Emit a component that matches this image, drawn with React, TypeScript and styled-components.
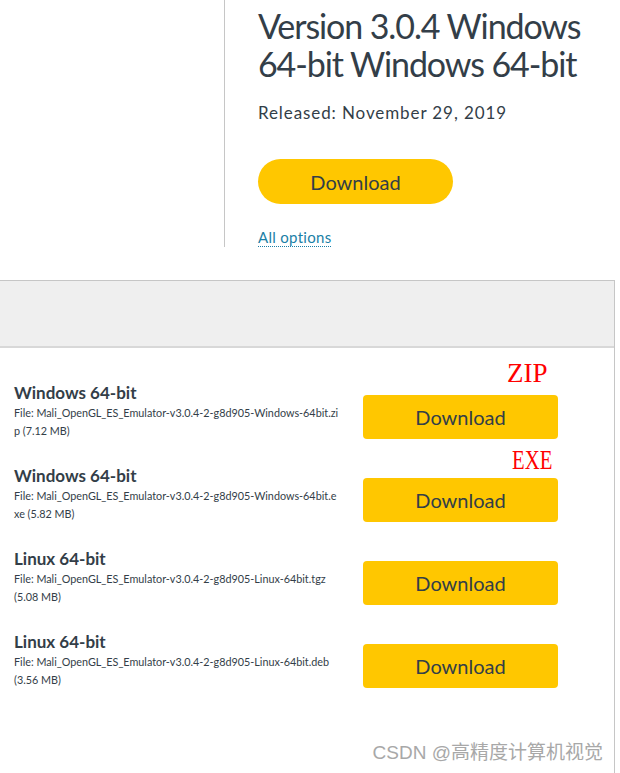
import React from 'react'
import styled, { createGlobalStyle } from 'styled-components'

const GlobalStyle = createGlobalStyle`
  html, body {
    margin: 0;
    padding: 0;
    background: #fff;
  }

  body {
    font-family: Lato, 'Open Sans', sans-serif;
    color: #333e48;
  }
`

type DownloadItem = {
  platform: string
  file: string
  size: string
  note?: string
  noteGap?: number
  noteLeft?: number
  noteSqueeze?: number
}

const downloads: DownloadItem[] = [
  {
    platform: 'Windows 64-bit',
    file: 'Mali_OpenGL_ES_Emulator-v3.0.4-2-g8d905-Windows-64bit.zip',
    size: '7.12 MB',
    note: 'ZIP',
    noteGap: 8,
    noteLeft: 144,
  },
  {
    platform: 'Windows 64-bit',
    file: 'Mali_OpenGL_ES_Emulator-v3.0.4-2-g8d905-Windows-64bit.exe',
    size: '5.82 MB',
    note: 'EXE',
    noteGap: 4,
    noteLeft: 149,
    noteSqueeze: 0.77,
  },
  {
    platform: 'Linux 64-bit',
    file: 'Mali_OpenGL_ES_Emulator-v3.0.4-2-g8d905-Linux-64bit.tgz',
    size: '5.08 MB',
  },
  {
    platform: 'Linux 64-bit',
    file: 'Mali_OpenGL_ES_Emulator-v3.0.4-2-g8d905-Linux-64bit.deb',
    size: '3.56 MB',
  },
]

export default function App() {
  return (
    <>
      <GlobalStyle />
      <Page>
        <Hero>
          <Aside />
          <HeroBody>
            <Title>Version 3.0.4 Windows 64-bit Windows 64-bit</Title>
            <Released>Released: November 29, 2019</Released>
            <PillButton>Download</PillButton>
            <AllOptions href="#">All options</AllOptions>
          </HeroBody>
        </Hero>

        <Panel>
          <PanelHeader />
          <List>
            {downloads.map((d, i) => (
              <Row key={i}>
                <Info>
                  <Platform>{d.platform}</Platform>
                  <FileName>
                    File: <FilePath>{d.file}</FilePath> <Size>({d.size})</Size>
                  </FileName>
                </Info>
                <ButtonCell>
                  {d.note && (
                    <Note
                      $gap={d.noteGap ?? 8}
                      $left={d.noteLeft ?? 144}
                      $squeeze={d.noteSqueeze ?? 1}>
                      {d.note}
                    </Note>
                  )}
                  <RowButton>Download</RowButton>
                </ButtonCell>
              </Row>
            ))}
          </List>
        </Panel>

        <Watermark>CSDN @高精度计算机视觉</Watermark>
      </Page>
    </>
  )
}

const Page = styled.div`
  position: relative;
  display: flex;
  flex-direction: column;
  min-height: 100vh;
  overflow: hidden;
`

const Hero = styled.section`
  display: flex;
`

const Aside = styled.div`
  width: 224px;
  flex-shrink: 0;
  border-right: 1px solid #c6c6c6;
`

const HeroBody = styled.div`
  display: flex;
  flex-direction: column;
  align-items: flex-start;
  padding: 7px 0 0 33px;
`

const Title = styled.h1`
  margin: 0;
  font-size: 34px;
  line-height: 38px;
  font-weight: 400;
  letter-spacing: -1.1px;
  color: #333e48;
`

const Released = styled.p`
  margin: 18px 0 0;
  font-size: 17px;
  line-height: 24px;
  letter-spacing: 0.9px;
`

const PillButton = styled.button`
  margin-top: 34px;
  width: 195px;
  height: 45px;
  border: none;
  border-radius: 23px;
  background: #ffc700;
  color: #333e48;
  font-family: inherit;
  font-size: 20px;
  cursor: pointer;
`

const AllOptions = styled.a`
  margin-top: 23px;
  font-size: 15px;
  line-height: 20px;
  letter-spacing: 0.3px;
  color: #1b7fa6;
  text-decoration-line: underline;
  text-decoration-style: dotted;
  text-decoration-thickness: 1px;
  text-underline-offset: 3px;
`

const Panel = styled.section`
  flex: 1;
  width: 615px;
  margin-top: 33px;
  box-sizing: border-box;
  border-top: 1px solid #c6c6c6;
  border-right: 1px solid #c6c6c6;
`

const PanelHeader = styled.div`
  height: 65px;
  background: #efefef;
  border-bottom: 2px solid #d8d8d8;
`

const List = styled.div`
  display: flex;
  flex-direction: column;
  gap: 25px;
  padding: 34px 0 0 14px;
`

const Row = styled.div`
  display: grid;
  grid-template-columns: 325px 195px;
  column-gap: 24px;
  align-items: start;
`

const Info = styled.div`
  display: flex;
  flex-direction: column;
`

const Platform = styled.h3`
  margin: 0;
  font-size: 17px;
  line-height: 22px;
  font-weight: 700;
`

const FileName = styled.p`
  margin: 0;
  font-size: 10.8px;
  line-height: 18px;
`

const FilePath = styled.span`
  word-break: break-all;
`

const Size = styled.span`
  white-space: nowrap;
`

const ButtonCell = styled.div`
  position: relative;
  padding-top: 13px;
`

const RowButton = styled.button`
  display: block;
  width: 195px;
  height: 44px;
  border: none;
  border-radius: 4px;
  background: #ffc700;
  color: #333e48;
  font-family: inherit;
  font-size: 20px;
  cursor: pointer;
`

const Note = styled.span<{ $gap: number; $left: number; $squeeze: number }>`
  position: absolute;
  left: ${(p) => p.$left}px;
  bottom: calc(100% - 13px + ${(p) => p.$gap}px);
  font-family: 'Liberation Serif', serif;
  font-size: 27px;
  line-height: 27px;
  color: #ff0000;
  transform: scaleX(${(p) => p.$squeeze});
  transform-origin: left bottom;
  white-space: nowrap;
`

const Watermark = styled.div`
  position: absolute;
  right: 17px;
  bottom: 9px;
  font-family: 'Liberation Sans', 'Noto Sans CJK SC', sans-serif;
  font-size: 19px;
  line-height: 22px;
  color: #a8a8a8;
  pointer-events: none;
`
